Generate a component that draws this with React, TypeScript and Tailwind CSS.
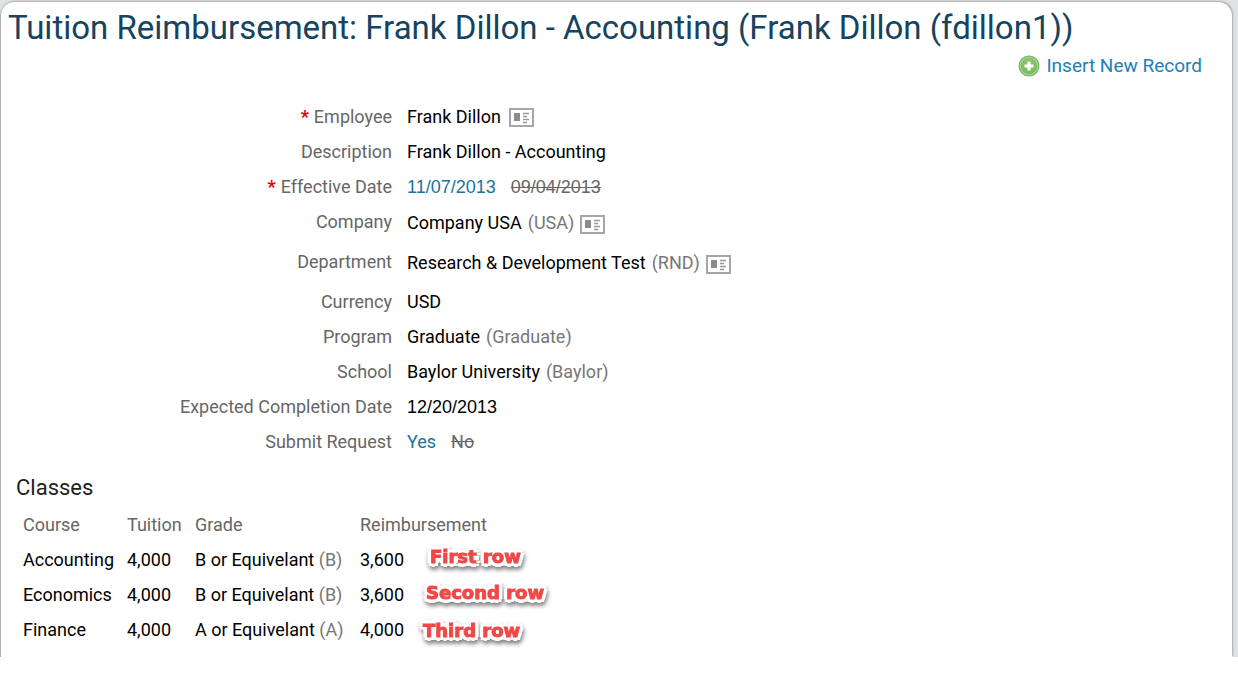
import React from 'react';
import clsx from 'clsx';

interface Field {
  label: string;
  value: string;
  code?: string;
  oldValue?: string;
  required?: boolean;
  changed?: boolean;
  isDate?: boolean;
  card?: boolean;
  tall?: boolean;
}

interface ClassRow {
  course: string;
  tuition: string;
  grade: string;
  gradeCode: string;
  reimbursement: string;
}

const fields: Field[] = [
  { label: 'Employee', value: 'Frank Dillon', required: true, card: true },
  { label: 'Description', value: 'Frank Dillon - Accounting' },
  { label: 'Effective Date', value: '11/07/2013', oldValue: '09/04/2013', required: true, changed: true, isDate: true },
  { label: 'Company', value: 'Company USA', code: 'USA', card: true, tall: true },
  { label: 'Department', value: 'Research & Development Test', code: 'RND', card: true, tall: true },
  { label: 'Currency', value: 'USD' },
  { label: 'Program', value: 'Graduate', code: 'Graduate' },
  { label: 'School', value: 'Baylor University', code: 'Baylor' },
  { label: 'Expected Completion Date', value: '12/20/2013', isDate: true },
  { label: 'Submit Request', value: 'Yes', oldValue: 'No', changed: true },
];

const classes: ClassRow[] = [
  { course: 'Accounting', tuition: '4,000', grade: 'B or Equivelant', gradeCode: 'B', reimbursement: '3,600' },
  { course: 'Economics', tuition: '4,000', grade: 'B or Equivelant', gradeCode: 'B', reimbursement: '3,600' },
  { course: 'Finance', tuition: '4,000', grade: 'A or Equivelant', gradeCode: 'A', reimbursement: '4,000' },
];

const callouts = [
  { text: 'First row', position: 'left-[429px] top-[73px]' },
  { text: 'Second row', position: 'left-[425px] top-[109px]' },
  { text: 'Third row', position: 'left-[422px] top-[147px]' },
];

function CardIcon() {
  return (
    <svg width="25" height="19" viewBox="0 0 25 19" aria-hidden="true">
      <rect x="1" y="1" width="23" height="17" fill="#fff" stroke="#a6a6a6" strokeWidth="2" />
      <rect x="5" y="5" width="6" height="8" fill="#8c8c8c" />
      <path d="M14 5.5h6M14 8.5h4M14 11.5h6M14 14.5h4" stroke="#999" strokeWidth="1.5" />
    </svg>
  );
}

function AddIcon() {
  return (
    <svg width="22" height="22" viewBox="0 0 22 22" aria-hidden="true">
      <defs>
        <linearGradient id="add-fill" x1="0" y1="0" x2="0" y2="1">
          <stop offset="0" stopColor="#8cc474" />
          <stop offset="1" stopColor="#74bd58" />
        </linearGradient>
      </defs>
      <circle cx="11" cy="11" r="10.5" fill="#78b364" />
      <circle cx="11" cy="11" r="8.8" fill="url(#add-fill)" stroke="#a3d290" strokeWidth="1.2" />
      <path d="M11 6.5v9M6.5 11h9" stroke="#fff" strokeWidth="3.2" />
    </svg>
  );
}

function FieldRow({ field }: { field: Field }) {
  return (
    <div className={clsx('flex gap-[15px] pt-1', field.tall ? 'h-10' : 'h-[35px]')}>
      <dt className="w-[391px] shrink-0 text-right text-[#666]">
        {field.required && <span className="mr-[5px] font-bold text-[#e60000]">*</span>}
        {field.label}
      </dt>
      <dd
        className={clsx(
          'flex items-start',
          field.tall && 'pt-px',
          field.isDate && "font-['Liberation_Sans',sans-serif]"
        )}
      >
        <span className={field.changed ? 'text-[#1a74a0]' : 'text-black'}>{field.value}</span>
        {field.code && <span className="ml-1.5 text-[#777]">({field.code})</span>}
        {field.oldValue && <del className="ml-[15px] text-[#666]">{field.oldValue}</del>}
        {field.card && (
          <button
            type="button"
            aria-label={`${field.label} details`}
            className={field.tall ? 'ml-1.5 mt-[6px]' : 'ml-2 mt-[5px]'}
          >
            <CardIcon />
          </button>
        )}
      </dd>
    </div>
  );
}

export default function App() {
  return (
    <div className="min-h-screen bg-white font-['Roboto','Liberation_Sans',sans-serif] text-[18px] leading-7">
      <div className="overflow-hidden bg-[#e0e2e4] pr-1.5 pt-0.5">
        <main className="rounded-t-[14px] border-l border-[#b0b2b4] bg-white pb-2.5 shadow-[1px_-1px_2px_#a8abae]">
          <h1 className="pl-[7px] text-[33px] leading-[52px] text-[#154360]">
            Tuition Reimbursement: Frank Dillon - Accounting (Frank Dillon (fdillon1))
          </h1>

          <div className="flex justify-end pr-[30px]">
            <a href="#insert" className="flex items-center gap-1.5 text-[19px] leading-6 text-[#1b7fb8]">
              <AddIcon />
              Insert New Record
            </a>
          </div>

          <dl className="mt-[21px]">
            {fields.map((field) => (
              <FieldRow key={field.label} field={field} />
            ))}
          </dl>

          <section className="relative mt-[11px]">
            <h2 className="pl-[15px] text-[22px] leading-9 text-[#222]">Classes</h2>
            <table className="ml-[22px] mt-px text-left">
              <thead>
                <tr className="h-[35px] text-[#666]">
                  <th className="w-[104px] font-normal">Course</th>
                  <th className="w-[68px] font-normal">Tuition</th>
                  <th className="w-[165px] font-normal">Grade</th>
                  <th className="font-normal">Reimbursement</th>
                </tr>
              </thead>
              <tbody>
                {classes.map((row) => (
                  <tr key={row.course} className="h-[35px] text-black">
                    <td>{row.course}</td>
                    <td>{row.tuition}</td>
                    <td>
                      {row.grade} <span className="text-[#777]">({row.gradeCode})</span>
                    </td>
                    <td>{row.reimbursement}</td>
                  </tr>
                ))}
              </tbody>
            </table>

            {/* Callouts floating over the table */}
            {callouts.map((callout) => (
              <span
                key={callout.text}
                className={clsx(
                  "absolute whitespace-nowrap font-['DejaVu_Sans',sans-serif] text-[18px] font-bold text-[#f04848]",
                  'drop-shadow-[1px_3px_2px_rgba(0,0,0,0.5)] [-webkit-text-stroke:1px_#f04848]',
                  '[text-shadow:2px_0_#fff,-2px_0_#fff,0_2px_#fff,0_-2px_#fff,4px_0_#fff,-4px_0_#fff,0_4px_#fff,0_-4px_#fff,3px_3px_#fff,-3px_3px_#fff,3px_-3px_#fff,-3px_-3px_#fff]',
                  callout.position
                )}
              >
                {callout.text}
              </span>
            ))}
          </section>
        </main>
      </div>
    </div>
  );
}
